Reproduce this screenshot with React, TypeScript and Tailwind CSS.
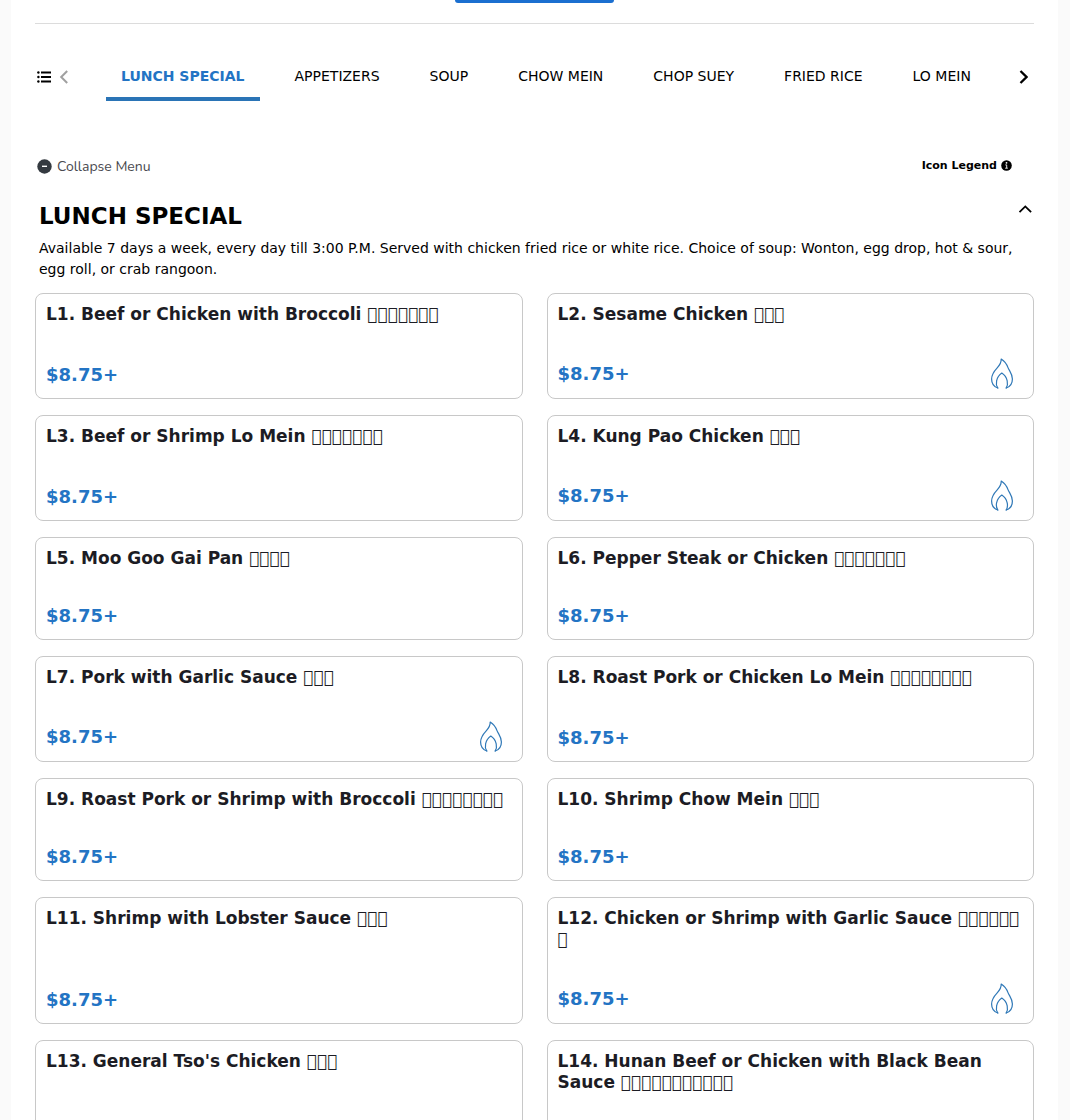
import { useState } from "react";
import clsx from "clsx";

// Ideograph that the interface font has no glyph for; it shows as an empty box.
const MISSING_GLYPH = "\u{3134F}";

const categories = [
  "LUNCH SPECIAL",
  "APPETIZERS",
  "SOUP",
  "CHOW MEIN",
  "CHOP SUEY",
  "FRIED RICE",
  "LO MEIN",
];

interface MenuItem {
  name: string;
  glyphs: number;
  spicy?: boolean;
}

const lunchItems: MenuItem[] = [
  { name: "L1. Beef or Chicken with Broccoli", glyphs: 7 },
  { name: "L2. Sesame Chicken", glyphs: 3, spicy: true },
  { name: "L3. Beef or Shrimp Lo Mein", glyphs: 7 },
  { name: "L4. Kung Pao Chicken", glyphs: 3, spicy: true },
  { name: "L5. Moo Goo Gai Pan", glyphs: 4 },
  { name: "L6. Pepper Steak or Chicken", glyphs: 7 },
  { name: "L7. Pork with Garlic Sauce", glyphs: 3, spicy: true },
  { name: "L8. Roast Pork or Chicken Lo Mein", glyphs: 8 },
  { name: "L9. Roast Pork or Shrimp with Broccoli", glyphs: 8 },
  { name: "L10. Shrimp Chow Mein", glyphs: 3 },
  { name: "L11. Shrimp with Lobster Sauce", glyphs: 3 },
  { name: "L12. Chicken or Shrimp with Garlic Sauce", glyphs: 7, spicy: true },
  { name: "L13. General Tso's Chicken", glyphs: 3 },
  { name: "L14. Hunan Beef or Chicken with Black Bean Sauce", glyphs: 11 },
];

const ListIcon = () => (
  <svg width="14" height="12" viewBox="0 0 14 12" aria-hidden="true">
    <circle cx="1.4" cy="1.5" r="1.2" />
    <circle cx="1.4" cy="6" r="1.2" />
    <circle cx="1.4" cy="10.5" r="1.2" />
    <path d="M4 1.5h10M4 6h10M4 10.5h10" stroke="currentColor" strokeWidth="1.8" />
  </svg>
);

const ChevronLeft = () => (
  <svg width="9" height="14" viewBox="0 0 9 14" fill="none" aria-hidden="true">
    <path d="m8.2 1-6 6 6 6" stroke="currentColor" strokeWidth="2" />
  </svg>
);

const ChevronRight = () => (
  <svg width="9" height="14" viewBox="0 0 9 14" fill="none" aria-hidden="true">
    <path d="m1.5 1 6 6-6 6" stroke="currentColor" strokeWidth="2.3" />
  </svg>
);

const ChevronUp = () => (
  <svg width="14" height="8" viewBox="0 0 14 8" fill="none" aria-hidden="true">
    <path d="m1.5 7.2 5.8-5.8 5.8 5.8" stroke="currentColor" strokeWidth="1.8" />
  </svg>
);

const MinusCircle = () => (
  <svg width="15" height="15" viewBox="0 0 15 15" aria-hidden="true">
    <circle cx="7.5" cy="7.5" r="7.2" fill="#343a40" />
    <path d="M5 7.3h5" stroke="#fff" strokeWidth="1.4" />
  </svg>
);

const InfoCircle = () => (
  <svg width="11" height="11" viewBox="0 0 11 11" aria-hidden="true">
    <circle cx="5.5" cy="5.5" r="5.3" />
    <circle cx="5.5" cy="2.8" r="0.9" fill="#fff" />
    <path d="M4.3 4.9h1.4v3.2M4.2 8.2h2.6" stroke="#fff" strokeWidth="0.9" fill="none" />
  </svg>
);

const FlameIcon = () => (
  <svg
    width="24"
    height="31"
    viewBox="0 0 24 31"
    fill="none"
    stroke="#2f78b7"
    strokeWidth="1.2"
    strokeLinecap="round"
    strokeLinejoin="round"
    role="img"
    aria-label="Spicy"
  >
    <path d="M7.8 30C3.6 28.6 1.6 25.2 1.6 21C1.6 16 4.4 12.8 7.2 9.8C9.8 7 11.4 4.4 11.2 1C14.6 3.2 16.8 6.2 18 9.6C19.4 13.2 22.4 15.8 22.4 21C22.4 25.4 20 28.8 16.2 30" />
    <path d="M7.8 30C6.4 27.8 6 25.400 6.600 22.800C7.200 19.800 9 17 11.800 15C14.800 17 16.600 19.800 17.200 22.800C17.800 25.400 17.500 27.800 16.200 30" />
  </svg>
);

const MenuCard = ({ item }: { item: MenuItem }) => (
  <li className="flex flex-col justify-between gap-[33px] rounded-lg border border-[#c8c8c8] bg-white px-[10px] pt-[10px] pb-[9px]">
    <h3 className="text-[17px] leading-[21px] font-bold text-[#1c1c24]">
      {item.name} {MISSING_GLYPH.repeat(item.glyphs)}
    </h3>
    <div className="flex items-center justify-between pr-[9px]">
      <span className="text-[18px] leading-7 font-bold text-[#2374c4]">$8.75+</span>
      {item.spicy && <FlameIcon />}
    </div>
  </li>
);

export default function App() {
  const [active, setActive] = useState(categories[0]);
  const [open, setOpen] = useState(true);

  return (
    <div className="h-screen overflow-hidden bg-[#fafafa] pr-3 pl-[11px] font-['DejaVu_Sans',sans-serif] text-black">
      <main className="min-h-full bg-white px-6">
        <div className="flex h-6 items-start justify-center border-b border-[#dcdcdc]">
          <button
            type="button"
            aria-label="Order"
            className="h-[3px] w-[159px] rounded-b bg-[#1b6fd0]"
          />
        </div>

        <nav className="flex items-center pt-[27px]" aria-label="Menu categories">
          <button type="button" aria-label="All categories" className="mr-2 ml-0.5 pt-0.5">
            <ListIcon />
          </button>
          <button type="button" aria-label="Previous" className="pt-0.5 text-[#a0a0a0]">
            <ChevronLeft />
          </button>
          <div className="ml-[38px] flex flex-1 gap-5">
            {categories.map((category) => (
              <button
                key={category}
                type="button"
                onClick={() => setActive(category)}
                className={clsx(
                  "border-b-4 px-[15px] pt-[15px] pb-[10px] text-[14px] leading-[21px] whitespace-nowrap",
                  category === active
                    ? "border-[#2a74b6] font-bold text-[#2374c4]"
                    : "border-transparent",
                )}
              >
                {category}
              </button>
            ))}
          </div>
          <button type="button" aria-label="Next" className="mr-1.5 pt-0.5">
            <ChevronRight />
          </button>
        </nav>

        <div className="mt-[54px] flex items-start justify-between pr-[22px] pl-0.5">
          <button
            type="button"
            onClick={() => setOpen(!open)}
            className="flex items-center gap-[5px] pt-px font-['Nunito','Open_Sans',sans-serif] text-[14px] leading-[21px] text-[#4a4a4f]"
          >
            <MinusCircle />
            Collapse Menu
          </button>
          <button
            type="button"
            className="flex items-center gap-1 text-[11px] leading-[21px] font-bold"
          >
            Icon Legend
            <InfoCircle />
          </button>
        </div>

        <section aria-labelledby="section-title">
          <div className="mt-[23px] flex items-start justify-between pr-0.5 pl-1">
            <h2 id="section-title" className="text-[23px] leading-8 font-bold">
              LUNCH SPECIAL
            </h2>
            <button
              type="button"
              aria-label="Toggle section"
              onClick={() => setOpen(!open)}
              className="pt-[5px]"
            >
              <ChevronUp />
            </button>
          </div>
          <p className="mt-1.5 px-1 text-[14px] leading-[21px]">
            Available 7 days a week, every day till 3:00 P.M. Served with chicken fried rice or
            white rice. Choice of soup: Wonton, egg drop, hot &amp; sour, egg roll, or crab rangoon.
          </p>
          {open && (
            <ul className="mt-[13px] grid grid-cols-2 gap-x-6 gap-y-4">
              {lunchItems.map((item) => (
                <MenuCard key={item.name} item={item} />
              ))}
            </ul>
          )}
        </section>
      </main>
    </div>
  );
}
